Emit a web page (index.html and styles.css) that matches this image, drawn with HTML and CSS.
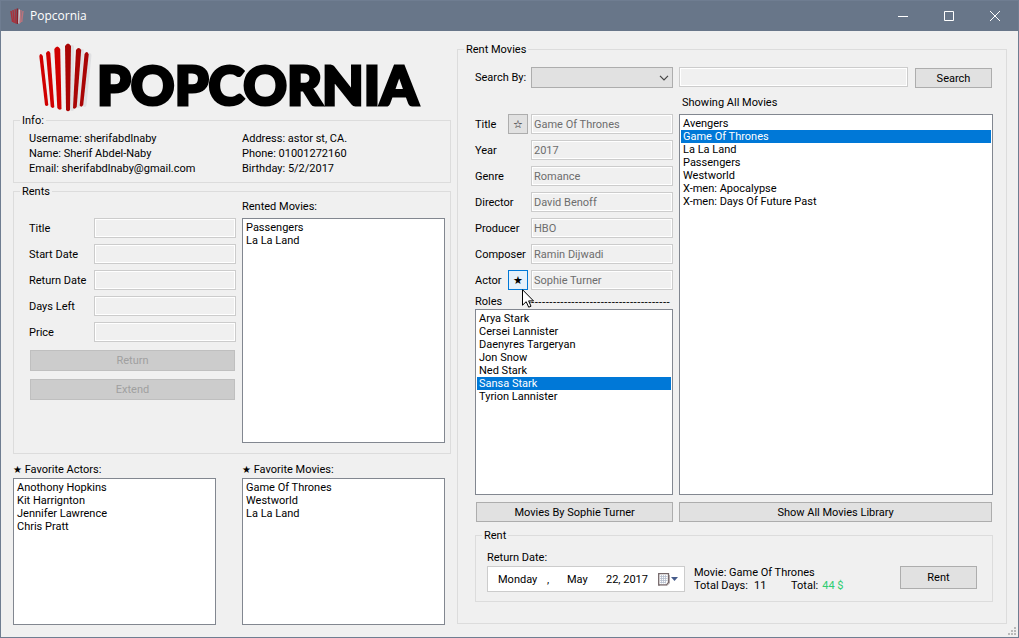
FILE: index.html
```html
<!DOCTYPE html>
<html lang="en">
<head>
<meta charset="utf-8">
<title>Popcornia</title>
<link rel="stylesheet" href="styles.css">
</head>
<body>
<div class="window">
  <header class="titlebar">
    <svg class="app-icon" viewBox="0 0 14 16" aria-hidden="true">
      <path d="M1 3L2.600 14M3 2L4.200 15M5.200 1.200L5.800 15.500" stroke="#a8323c" stroke-width="1.500"/>
      <path d="M7.400 .5V16" stroke="#8c1f28" stroke-width="1.600"/>
      <path d="M9.300 1.500L8.900 15.500" stroke="#e3d5d8" stroke-width="1.300"/>
      <path d="M11 2L10.200 15M13 3L11.700 14" stroke="#b9747d" stroke-width="1.400"/>
    </svg>
    <span class="window-title">Popcornia</span>
    <div class="window-controls">
      <button class="window-button" type="button" aria-label="Minimize"><svg viewBox="0 0 12 12"><path d="M1 6.500H11"/></svg></button>
      <button class="window-button" type="button" aria-label="Maximize"><svg viewBox="0 0 12 12"><path d="M1.500 1.500H10.500V10.500H1.500Z"/></svg></button>
      <button class="window-button" type="button" aria-label="Close"><svg viewBox="0 0 12 12"><path d="M1 1L11 11M11 1L1 11"/></svg></button>
    </div>
  </header>

  <main class="content">
    <section class="account">
      <h1 class="logo">
        <svg class="logo-mark" viewBox="0 0 54 70" aria-hidden="true">
          <g fill="none" stroke-linecap="round" stroke="#dfe0e2">
            <path d="M33 4V66" stroke-width="4"/>
            <path d="M43 8L39 63" stroke-width="4"/>
            <path d="M50.500 12L45.500 62" stroke-width="4"/>
          </g>
          <g fill="#d00000">
            <path d="M.3 13Q1.500 9 3.800 13L9.300 62Q7.500 64 6 62Z"/>
            <path d="M7 10Q9.500 6 11.300 10L15.300 64Q13.300 66 11.700 63.500Z"/>
            <path d="M15.300 6Q18.300 1 21.200 6L22.500 66Q20.300 68 18.300 65Z"/>
          </g>
          <g fill="#a90505">
            <path d="M26 3Q29-2 32 3L31 67Q29 69.500 27 67Z"/>
            <path d="M37 7Q39.700 3 42.200 7L37.700 64Q35.700 67 34 65Z"/>
            <path d="M45.500 11Q48 7 49.700 11.500L44.200 62Q42.200 65 40.700 62.500Z"/>
          </g>
        </svg>
        <span class="logo-text">POPCORNIA</span>
      </h1>

      <fieldset class="group info">
        <legend>Info:</legend>
        <div class="info-column">
          <span>Username: sherifabdlnaby</span>
          <span>Name: Sherif Abdel-Naby</span>
          <span>Email: sherifabdlnaby@gmail.com</span>
        </div>
        <div class="info-column">
          <span>Address: astor st, CA.</span>
          <span>Phone: 01001272160</span>
          <span>Birthday: 5/2/2017</span>
        </div>
      </fieldset>

      <fieldset class="group rents">
        <legend>Rents</legend>
        <div class="rent-form">
          <div class="field wide"><label for="r-title">Title</label><input id="r-title" class="box" disabled></div>
          <div class="field wide"><label for="r-start">Start Date</label><input id="r-start" class="box" disabled></div>
          <div class="field wide"><label for="r-return">Return Date</label><input id="r-return" class="box" disabled></div>
          <div class="field wide"><label for="r-days">Days Left</label><input id="r-days" class="box" disabled></div>
          <div class="field wide"><label for="r-price">Price</label><input id="r-price" class="box" disabled></div>
          <div class="rent-actions">
            <button class="button" type="button" disabled>Return</button>
            <button class="button" type="button" disabled>Extend</button>
          </div>
        </div>
        <div class="list-block">
          <label for="rented">Rented Movies:</label>
          <select id="rented" class="list" size="8">
            <option>Passengers</option>
            <option>La La Land</option>
          </select>
        </div>
      </fieldset>

      <div class="favorites">
        <div class="list-block">
          <label for="fav-actors"><span class="star">★</span> Favorite Actors:</label>
          <select id="fav-actors" class="list" size="8">
            <option>Anothony Hopkins</option>
            <option>Kit Harrignton</option>
            <option>Jennifer Lawrence</option>
            <option>Chris Pratt</option>
          </select>
        </div>
        <div class="list-block">
          <label for="fav-movies"><span class="star">★</span> Favorite Movies:</label>
          <select id="fav-movies" class="list" size="8">
            <option>Game Of Thrones</option>
            <option>Westworld</option>
            <option>La La Land</option>
          </select>
        </div>
      </div>
    </section>

    <fieldset class="group store">
      <legend>Rent Movies</legend>
      <div class="store-row">
        <div class="field">
          <label for="search-by">Search By:</label>
          <span class="combo">
            <select id="search-by" class="combo-select"><option></option></select>
            <svg class="combo-arrow" viewBox="0 0 10 6" aria-hidden="true"><path d="M1 .8L5 4.800L9 .8"/></svg>
          </span>
        </div>
        <div class="search">
          <input class="box" aria-label="Search text" disabled>
          <button class="button" type="button">Search</button>
        </div>
      </div>

      <div class="store-row browse">
        <div class="details">
          <div class="field"><label for="m-title">Title</label><button class="star-button" type="button" aria-label="Favorite movie">☆</button><input id="m-title" class="box" value="Game Of Thrones" disabled></div>
          <div class="field"><label for="m-year">Year</label><input id="m-year" class="box" value="2017" disabled></div>
          <div class="field"><label for="m-genre">Genre</label><input id="m-genre" class="box" value="Romance" disabled></div>
          <div class="field"><label for="m-director">Director</label><input id="m-director" class="box" value="David Benoff" disabled></div>
          <div class="field"><label for="m-producer">Producer</label><input id="m-producer" class="box" value="HBO" disabled></div>
          <div class="field"><label for="m-composer">Composer</label><input id="m-composer" class="box" value="Ramin Dijwadi" disabled></div>
          <div class="field">
            <label for="m-actor">Actor</label>
            <button class="star-button hot" type="button" aria-label="Favorite actor">★
              <svg class="cursor" viewBox="0 0 12 19" aria-hidden="true"><path d="M.5 .7V16.200L4.200 12.700L6.700 18.200L9 17.200L6.600 11.900H11.500Z"/></svg>
            </button>
            <input id="m-actor" class="box" value="Sophie Turner" disabled>
          </div>
          <div class="roles-head"><label for="roles">Roles</label><span class="rule" aria-hidden="true">---------------------------------------</span></div>
          <select id="roles" class="list" size="8">
            <option>Arya Stark</option>
            <option>Cersei Lannister</option>
            <option>Daenyres Targeryan</option>
            <option>Jon Snow</option>
            <option>Ned Stark</option>
            <option selected>Sansa Stark</option>
            <option>Tyrion Lannister</option>
          </select>
        </div>
        <div class="list-block">
          <label for="movies">Showing All Movies</label>
          <select id="movies" class="list" size="8">
            <option>Avengers</option>
            <option selected>Game Of Thrones</option>
            <option>La La Land</option>
            <option>Passengers</option>
            <option>Westworld</option>
            <option>X-men: Apocalypse</option>
            <option>X-men: Days Of Future Past</option>
          </select>
        </div>
      </div>

      <div class="store-row actions">
        <button class="button" type="button">Movies By Sophie Turner</button>
        <button class="button" type="button">Show All Movies Library</button>
      </div>

      <fieldset class="group rent">
        <legend>Rent</legend>
        <div class="date-block">
          <label for="return-date">Return Date:</label>
          <button id="return-date" class="date-picker" type="button" aria-haspopup="dialog">
            <span class="weekday">Monday</span><span class="comma">,</span><span class="month">May</span><span class="day">22, 2017</span>
            <svg class="calendar" viewBox="0 0 22 13" aria-hidden="true">
              <path d="M.7 .7H10.500V9.500L8.500 12H.7Z" fill="#fff" stroke="#75686a" stroke-width="1.300"/>
              <path d="M2 3.500H9.500M2 5.500H9.500M2 7.500H9.500M2 9.500H8M3.500 2V10.500M5.500 2V10.500M7.500 2V10.500" stroke="#b4bccb" stroke-width=".8"/>
              <path d="M2 12.500H9L11.500 10V2" fill="none" stroke="#b3aaac" stroke-width="1"/>
              <path d="M13 4H20L16.500 8Z" fill="#465c8b"/>
            </svg>
          </button>
        </div>
        <div class="summary">
          <span>Movie: Game Of Thrones</span>
          <span class="totals"><span class="days">Total Days:</span><span class="count">11</span><span>Total:</span><span class="price">44 $</span></span>
        </div>
        <button class="button rent-button" type="button">Rent</button>
      </fieldset>
    </fieldset>
    <svg class="grip" viewBox="0 0 8 8" aria-hidden="true"><path d="M6 0h2v2h-2zM3 3h2v2h-2zM6 3h2v2h-2zM0 6h2v2h-2zM3 6h2v2h-2zM6 6h2v2h-2z" fill="#b9b9b9"/></svg>
  </main>
</div>
</body>
</html>
```
FILE: styles.css
```css
* { box-sizing: border-box; }

body {
  margin: 0;
  color: #000;
  font: 11px/13px Roboto, "Liberation Sans", sans-serif;
}

button, input, select {
  margin: 0;
  font: inherit;
  color: inherit;
  border-radius: 0;
}

label { white-space: nowrap; }

.window {
  display: flex;
  flex-direction: column;
  min-height: 100vh;
  background: #f0f0f0;
  border: 1px solid #6f7d91;
}

/* Title bar */
.titlebar {
  display: flex;
  align-items: center;
  height: 30px;
  padding-left: 9px;
  background: #687689;
  color: #fff;
}
.app-icon { width: 14px; height: 16px; fill: none; }
.window-title {
  flex: 1;
  padding-left: 6px;
  font: 12px/16px "Open Sans", "Noto Sans", sans-serif;
}
.window-controls { display: flex; }
.window-button {
  display: grid;
  place-items: center;
  width: 46px;
  height: 30px;
  padding: 0;
  border: 0;
  background: none;
}
.window-button svg {
  width: 12px;
  height: 12px;
  fill: none;
  stroke: #fff;
}

.content {
  position: relative;
  flex: 1;
  display: grid;
  grid-template-columns: 438fr 550fr;
  gap: 6px;
  padding: 12px 11px 12px 12px;
}
.grip {
  position: absolute;
  right: 2px;
  bottom: 2px;
  width: 8px;
  height: 8px;
}

/* Shared controls */
.group {
  min-width: 0;
  margin: 0;
  border: 1px solid #dcdcdc;
}
.group > legend {
  margin-left: -1px;
  padding: 0 2px;
}
.box {
  flex: 1;
  min-width: 0;
  width: 100%;
  height: 20px;
  padding: 0 2px;
  border: 1px solid #ccc;
  box-shadow: inset 0 0 0 1px #fff;
  background: #f0f0f0;
  color: #6d6d6d;
}
.button {
  height: 21px;
  padding: 0;
  border: 1px solid #adadad;
  background: #e1e1e1;
}
.button:disabled {
  border-color: #bfbfbf;
  background: #ccc;
  color: #a0a0a0;
}
.list {
  flex: 1;
  min-height: 0;
  width: 100%;
  padding: 2px 1px;
  border: 1px solid #828790;
  background: #fff;
  outline: 0;
  overflow: hidden;
}
.list option {
  min-height: 13px;
  padding: 0 2px;
  line-height: 13px;
}
.list option:checked {
  background: #0078d7 linear-gradient(#0078d7, #0078d7);
  color: #fff;
  -webkit-text-fill-color: #fff;
}
.list-block {
  display: flex;
  flex-direction: column;
  gap: 3px;
  min-width: 0;
}
.field {
  display: flex;
  align-items: center;
}
.field label { flex: 0 0 56px; }
.field.wide label { flex-basis: 65px; }
.field label:has(+ .star-button) { flex-basis: 33px; }

/* Account side */
.account {
  display: flex;
  flex-direction: column;
  min-width: 0;
}
.logo {
  display: flex;
  align-items: flex-start;
  gap: 4px;
  height: 71px;
  margin: 0;
  padding-left: 26px;
}
.logo-mark { width: 54px; height: 70px; }
.logo-text {
  padding-top: 15px;
  font: 900 54px/54px Lato, sans-serif;
  -webkit-text-stroke: 3px #000;
}
.info {
  display: grid;
  grid-template-columns: 207fr 203fr;
  gap: 6px;
  padding: 4px 5px 6px 15px;
}
.group.info > legend, .group.rents > legend { margin-left: -9px; }
.info-column {
  display: flex;
  flex-direction: column;
  line-height: 15px;
}
.rents {
  flex: 1;
  display: grid;
  grid-template-columns: 207fr 203fr;
  gap: 6px;
  margin-top: 2px;
  padding: 2px 5px 10px 15px;
}
.rent-form {
  display: flex;
  flex-direction: column;
  gap: 6px;
  padding-top: 18px;
}
.rents .list-block { gap: 5px; }
.rent-actions {
  display: flex;
  flex-direction: column;
  gap: 8px;
  padding: 2px 1px;
}
.favorites {
  display: grid;
  grid-template-columns: 1fr 1fr;
  gap: 26px;
  height: 171px;
  padding: 9px 6px 0 0;
}
.favorites .list-block { gap: 2px; }
.star { font: 10px/13px "DejaVu Sans", sans-serif; }

/* Store side */
.store {
  display: flex;
  flex-direction: column;
  padding: 11px 13px 21px 17px;
}
.group.store { margin-bottom: 1px; }
.group.store > legend { margin-left: -11px; }
.store-row {
  display: grid;
  grid-template-columns: 198fr 314fr;
  gap: 6px;
}
.combo {
  position: relative;
  flex: 1;
  display: flex;
}
.combo-select {
  appearance: none;
  width: 100%;
  height: 21px;
  border: 1px solid #adadad;
  background: #e1e1e1;
}
.combo-arrow {
  position: absolute;
  right: 4px;
  top: 8px;
  width: 10px;
  height: 6px;
  fill: none;
  stroke: #444;
  stroke-width: 1.2;
  pointer-events: none;
}
.search {
  display: flex;
  gap: 7px;
  padding-right: 1px;
}
.search .button {
  width: 77px;
  height: 20px;
  margin-top: 1px;
}
.browse {
  flex: 1;
  padding-top: 8px;
}
.browse .list-block { gap: 5px; }
.browse .list-block label { padding-left: 3px; }
.details {
  display: flex;
  flex-direction: column;
  gap: 6px;
  padding-top: 18px;
}
.star-button {
  position: relative;
  flex: 0 0 20px;
  height: 20px;
  margin-right: 3px;
  padding: 0;
  border: 1px solid #adadad;
  background: #e1e1e1;
  font: 11px/13px "DejaVu Sans", sans-serif;
}
.star-button.hot {
  border-color: #0078d7;
  background: #e5f1fb;
}
.cursor {
  position: absolute;
  left: 13px;
  top: 18px;
  width: 12px;
  height: 19px;
  fill: #fff;
  stroke: #000;
}
.roles-head {
  display: flex;
  justify-content: space-between;
  padding-right: 3px;
  margin: -1px 0 -5px;
}
.rule { font-family: "Liberation Sans", sans-serif; }
.actions {
  gap: 6px;
  padding: 7px 1px 0;
}
.actions .button { height: 20px; }
.rent {
  display: flex;
  align-items: flex-start;
  margin-top: 7px;
  padding: 9px 15px 9px 11px;
}
.group.rent { margin-top: 7px; }
.group.rent > legend { margin-left: -5px; }
.date-block {
  flex: 0 1 198px;
  display: flex;
  flex-direction: column;
  gap: 2px;
}
.date-picker {
  display: flex;
  align-items: center;
  height: 26px;
  padding: 0 4px 0 10px;
  border: 1px solid #ccc;
  background: #fff;
  text-align: left;
}
.weekday { width: 49px; }
.comma { width: 20px; }
.month { width: 39px; }
.day { flex: 1; white-space: nowrap; }
.calendar { width: 22px; height: 13px; }
.summary {
  display: flex;
  flex-direction: column;
  padding: 15px 0 0 9px;
}
.totals { display: flex; }
.days { width: 60px; }
.count { width: 37px; }
.price { padding-left: 4px; color: #2ecc71; }
.rent-button {
  width: 77px;
  height: 23px;
  margin: 15px 0 0 auto;
}
```
